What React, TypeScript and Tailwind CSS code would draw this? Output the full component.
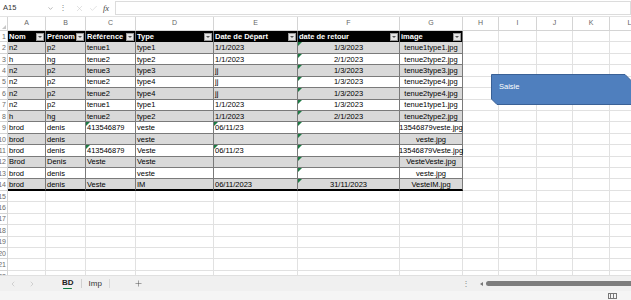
import React from "react";
import { X, Check, ChevronDown, ChevronLeft, ChevronRight, Plus } from "lucide-react";

type Col = { k: string; w: string; align: string };

const cols: Col[] = [
  { k: "A", w: "w-[38px]", align: "justify-start" },
  { k: "B", w: "w-[40px]", align: "justify-start" },
  { k: "C", w: "w-[50px]", align: "justify-start" },
  { k: "D", w: "w-[78px]", align: "justify-start" },
  { k: "E", w: "w-[84px]", align: "justify-start" },
  { k: "F", w: "w-[102px]", align: "justify-center" },
  { k: "G", w: "w-[63px]", align: "justify-center" },
  { k: "H", w: "w-[36px]", align: "justify-start" },
  { k: "I", w: "w-[38px]", align: "justify-start" },
  { k: "J", w: "w-[36px]", align: "justify-start" },
  { k: "K", w: "w-[37px]", align: "justify-start" },
  { k: "L", w: "w-[40px]", align: "justify-start" },
];

const headers = ["Nom", "Prénom", "Référence", "Type", "Date de Départ", "date de retour", "image"];

const data: string[][] = [
  ["n2", "p2", "tenue1", "type1", "1/1/2023", "1/3/2023", "tenue1type1.jpg"],
  ["h", "hg", "tenue2", "type2", "1/1/2023", "2/1/2023", "tenue2type2.jpg"],
  ["n2", "p2", "tenue3", "type3", "jj", "1/3/2023", "tenue3type3.jpg"],
  ["n2", "p2", "tenue2", "type4", "jj", "1/3/2023", "tenue2type4.jpg"],
  ["n2", "p2", "tenue2", "type4", "jj", "1/3/2023", "tenue2type4.jpg"],
  ["n2", "p2", "tenue1", "type1", "1/1/2023", "1/3/2023", "tenue1type1.jpg"],
  ["h", "hg", "tenue2", "type2", "1/1/2023", "2/1/2023", "tenue2type2.jpg"],
  ["brod", "denis", "413546879", "veste", "06/11/23", "", "13546879veste.jpg"],
  ["brod", "denis", "", "veste", "", "", "veste.jpg"],
  ["brod", "denis", "413546879", "Veste", "06/11/23", "", "13546879Veste.jpg"],
  ["Brod", "Denis", "Veste", "Veste", "", "", "VesteVeste.jpg"],
  ["brod", "denis", "", "veste", "", "", "veste.jpg"],
  ["brod", "denis", "Veste", "IM", "06/11/2023", "31/11/2023", "VesteIM.jpg"],
];

const flagged = new Set(["C9", "C11", "E9", "E11"]);

function Tri() {
  return (
    <span className="absolute left-0 top-0 w-0 h-0 border-t-[4px] border-t-[#1e7b45] border-r-[4px] border-r-transparent" />
  );
}

function DropBtn() {
  return (
    <span className="w-[8px] h-[8px] mr-[1px] bg-[#e4e4e4] border border-[#9a9a9a] flex items-center justify-center shrink-0">
      <span className="w-0 h-0 border-l-[2px] border-r-[2px] border-t-[2px] border-l-transparent border-r-transparent border-t-[#555]" />
    </span>
  );
}

function RowHdr({ n }: { n: number }) {
  return (
    <div className="w-[8px] shrink-0 h-full border-r border-b border-[#d4d4d4] overflow-hidden flex justify-end items-center bg-white">
      <span className="text-[7px] leading-[11px] text-[#6b6b6b] pr-[1px] whitespace-nowrap">{n}</span>
    </div>
  );
}

export default function App() {
  const rows: React.ReactNode[] = [];
  for (let r = 1; r <= 22; r++) {
    const cells: React.ReactNode[] = [];
    cols.forEach((c, ci) => {
      const inTable = r <= 14 && ci < 7;
      if (r === 1 && inTable) {
        cells.push(
          <div
            key={c.k}
            className={`${c.w} shrink-0 h-full bg-black border-r border-[#6e6e6e] flex items-center justify-between pl-[1px] overflow-hidden`}
          >
            <span className="text-white font-bold text-[7.5px] leading-[11px] whitespace-nowrap">{headers[ci]}</span>
            <DropBtn />
          </div>
        );
        return;
      }
      if (inTable) {
        const txt = data[r - 2][ci];
        const gray = r % 2 === 0;
        const tri = (ci === 5 && r >= 2) || flagged.has(`${c.k}${r}`);
        const bottom = r === 14 ? "border-b-2 border-b-black" : "border-b border-b-[#7a7a7a]";
        const clip = ci === 6 ? "overflow-visible" : "overflow-hidden";
        cells.push(
          <div
            key={c.k}
            className={`${c.w} shrink-0 h-full relative ${gray ? "bg-[#d9d9d9]" : "bg-white"} border-r border-r-[#7a7a7a] ${bottom} flex items-center ${c.align} ${clip} ${ci < 5 ? "pl-[1px]" : ""}`}
          >
            {tri && <Tri />}
            <span className="text-[7.5px] leading-[11px] text-black whitespace-nowrap">{txt}</span>
          </div>
        );
        return;
      }
      cells.push(
        <div key={c.k} className={`${c.w} shrink-0 h-full border-r border-b border-[#e1e1e1] bg-white`} />
      );
    });
    rows.push(
      <div key={r} className="flex h-[11.43px] shrink-0">
        <RowHdr n={r} />
        {cells}
      </div>
    );
  }

  return (
    <div className="relative w-[631px] h-[300px] overflow-hidden bg-white font-['Liberation_Sans',Arial,sans-serif] select-none">
      {/* Formula bar */}
      <div className="flex items-center h-[17px] border-b border-[#e3e3e3] bg-white">
        <div className="w-[57px] flex items-center justify-between pl-[3px] pr-[3px]">
          <span className="text-[7.5px] text-[#333]">A15</span>
          <ChevronDown size={7} className="text-[#666]" strokeWidth={1.5} />
        </div>
        <span className="ml-[2px] text-[8px] text-[#888] leading-none">⋮</span>
        <X size={9} className="ml-[8px] text-[#c4c4c4]" strokeWidth={1.3} />
        <Check size={9} className="ml-[5px] text-[#c4c4c4]" strokeWidth={1.3} />
        <span className="ml-[5px] text-[8.5px] italic text-[#444] font-['Liberation_Serif',serif]">fx</span>
        <div className="ml-[6px] flex-1 h-[14px] border border-[#dcdcdc] bg-white" />
      </div>

      {/* Column headers */}
      <div className="flex h-[14px] bg-white">
        <div className="w-[8px] shrink-0 h-full border-r border-b border-[#d4d4d4] relative">
          <span className="absolute right-[1px] bottom-[1px] w-0 h-0 border-b-[4px] border-b-[#c6c6c6] border-l-[4px] border-l-transparent" />
        </div>
        {cols.map((c) => (
          <div
            key={c.k}
            className={`${c.w} shrink-0 h-full border-r border-b border-[#d4d4d4] flex items-center justify-center`}
          >
            <span className="text-[7px] text-[#666]">{c.k}</span>
          </div>
        ))}
      </div>

      {/* Grid */}
      <div className="h-[244px] overflow-hidden flex flex-col">{rows}</div>

      {/* Tab bar */}
      <div className="flex items-center h-[16px] bg-[#f0f0f0] border-t border-[#e0e0e0]">
        <ChevronLeft size={8} className="ml-[9px] text-[#b0b0b0]" strokeWidth={1.5} />
        <ChevronRight size={8} className="ml-[11px] text-[#b0b0b0]" strokeWidth={1.5} />
        <div className="ml-[26px] flex flex-col items-center">
          <span className="text-[8px] leading-[10px] font-semibold text-[#222]">BD</span>
          <span className="w-[9px] h-[1.5px] bg-[#107c41] rounded" />
        </div>
        <span className="ml-[7px] w-px h-[9px] bg-[#d0d0d0]" />
        <span className="ml-[7px] text-[8px] text-[#333]">Imp</span>
        <span className="ml-[7px] w-px h-[9px] bg-[#d8d8d8]" />
        <Plus size={9} className="ml-[24px] text-[#555]" strokeWidth={1.4} />
        <div className="ml-auto flex items-center w-[171px]">
          <span className="ml-[2px] text-[8px] text-[#888] leading-none">⋮</span>
          <span className="ml-[10px] w-0 h-0 border-t-[2.5px] border-b-[2.5px] border-r-[3px] border-t-transparent border-b-transparent border-r-[#777]" />
          <div className="ml-[3px] flex-1 h-[5px] bg-[#7d7d7d] rounded-l-full" />
        </div>
      </div>

      {/* Status bar */}
      <div className="h-[9px] bg-[#f5f5f5] flex items-center justify-end pr-[14px]">
        <div className="w-[9px] h-[6px] border border-[#777] grid grid-cols-3">
          <span className="border-r border-[#777]" />
          <span className="border-r border-[#777]" />
          <span />
        </div>
      </div>

      {/* Shape "Saisie" */}
      <div className="absolute left-[491px] top-[74px] w-[150px] h-[31px]">
        <svg className="absolute inset-0" width="150" height="31" viewBox="0 0 150 31">
          <polygon points="0.5,0.5 134,0.5 140.5,7 140.5,30.5 6,30.5 0.5,25" fill="#4f7fbe" stroke="#3a6196" strokeWidth="1" />
        </svg>
        <span className="absolute left-[8px] top-[7px] text-[7.5px] text-white">Saisie</span>
      </div>
    </div>
  );
}
